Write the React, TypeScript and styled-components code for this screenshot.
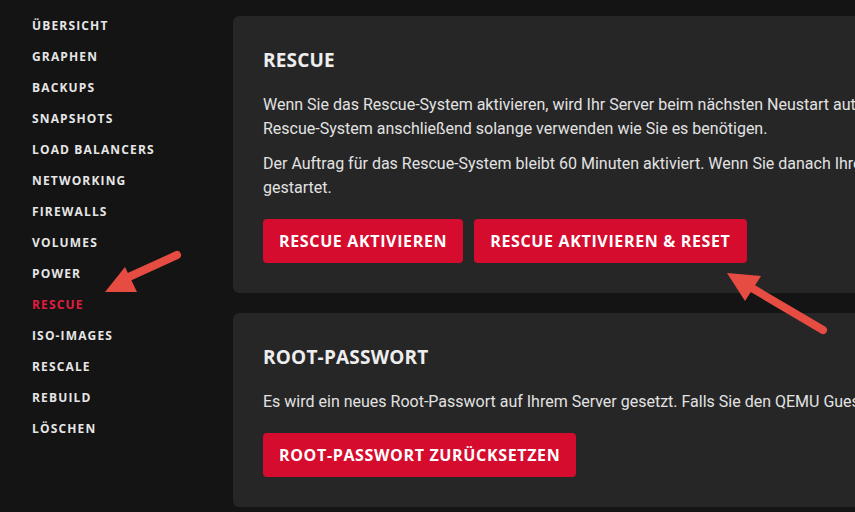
import React from 'react';
import styled, { createGlobalStyle } from 'styled-components';

const GlobalStyle = createGlobalStyle`
  html, body {
    margin: 0;
    padding: 0;
    width: 855px;
    height: 512px;
    overflow: hidden;
    background: #141414;
  }
`;

const Page = styled.div`
  position: relative;
  display: grid;
  grid-template-columns: 233px 1100px;
  height: 512px;
  background: #141414;
`;

const Sidebar = styled.nav`
  display: flex;
  flex-direction: column;
  padding: 10px 0 0 32px;
`;

const NavItem = styled.a<{ $active?: boolean }>`
  display: block;
  height: 31px;
  line-height: 31px;
  font-family: 'Open Sans', 'Liberation Sans', sans-serif;
  font-weight: 700;
  font-size: 12px;
  letter-spacing: 1.15px;
  color: ${props => (props.$active ? '#e11d3f' : '#e6e6e6')};
  text-decoration: none;
  cursor: pointer;
`;

const Main = styled.main`
  display: flex;
  flex-direction: column;
  gap: 20px;
  padding-top: 16px;
`;

const Card = styled.section`
  padding: 30px;
  border-radius: 6px;
  background: #262626;
`;

const Title = styled.h2`
  margin: 0 0 19px;
  font-family: 'Open Sans', 'Liberation Sans', sans-serif;
  font-weight: 700;
  font-size: 19px;
  letter-spacing: 0.2px;
  line-height: 28px;
  color: #eeeeee;
`;

const Text = styled.p`
  margin: 0 0 11px;
  font-family: Roboto, 'Liberation Sans', sans-serif;
  font-size: 16px;
  line-height: 24px;
  color: #e2e2e2;
  white-space: nowrap;

  &:last-of-type {
    margin-bottom: 0;
  }
`;

const Actions = styled.div`
  display: flex;
  gap: 11px;
  margin-top: 19px;
`;

const Button = styled.button`
  height: 44px;
  padding: 0 16px;
  border: 0;
  border-radius: 4px;
  background: #d50c2d;
  color: #ffffff;
  font-family: 'Open Sans', 'Liberation Sans', sans-serif;
  font-weight: 700;
  font-size: 16px;
  letter-spacing: 0.65px;
  cursor: pointer;
`;

const ArrowLayer = styled.svg`
  position: absolute;
  left: 0;
  top: 0;
  width: 855px;
  height: 512px;
  pointer-events: none;
`;

const navItems = [
  'ÜBERSICHT',
  'GRAPHEN',
  'BACKUPS',
  'SNAPSHOTS',
  'LOAD BALANCERS',
  'NETWORKING',
  'FIREWALLS',
  'VOLUMES',
  'POWER',
  'RESCUE',
  'ISO-IMAGES',
  'RESCALE',
  'REBUILD',
  'LÖSCHEN',
];

const ARROW = '#e74c42';

export default function App() {
  return (
    <>
      <GlobalStyle />
      <Page>
        <Sidebar>
          {navItems.map(item => (
            <NavItem key={item} $active={item === 'RESCUE'}>
              {item}
            </NavItem>
          ))}
        </Sidebar>
        <Main>
          <Card>
            <Title>RESCUE</Title>
            <Text>
              Wenn Sie das Rescue-System aktivieren, wird Ihr Server beim nächsten Neustart automatisch in
              das Rescue-System gebootet. Sie können das
              <br />
              Rescue-System anschließend solange verwenden wie Sie es benötigen.
            </Text>
            <Text>
              Der Auftrag für das Rescue-System bleibt 60 Minuten aktiviert. Wenn Sie danach Ihren Server neu
              starten, wird das Standardsystem
              <br />
              gestartet.
            </Text>
            <Actions>
              <Button>RESCUE AKTIVIEREN</Button>
              <Button>RESCUE AKTIVIEREN &amp; RESET</Button>
            </Actions>
          </Card>
          <Card>
            <Title>ROOT-PASSWORT</Title>
            <Text>
              Es wird ein neues Root-Passwort auf Ihrem Server gesetzt. Falls Sie den QEMU Guest Agent nicht
              installiert haben, wird der Server neu gestartet.
            </Text>
            <Actions>
              <Button>ROOT-PASSWORT ZURÜCKSETZEN</Button>
            </Actions>
          </Card>
        </Main>
        <ArrowLayer viewBox="0 0 855 512">
          <line x1="177" y1="255" x2="120" y2="281" stroke={ARROW} strokeWidth="8" strokeLinecap="round" />
          <polygon points="105,292 125,267 137,292" fill={ARROW} />
          <line x1="823" y1="330" x2="745" y2="284" stroke={ARROW} strokeWidth="8" strokeLinecap="round" />
          <polygon points="727,273 761,276 745,301" fill={ARROW} />
        </ArrowLayer>
      </Page>
    </>
  );
}
